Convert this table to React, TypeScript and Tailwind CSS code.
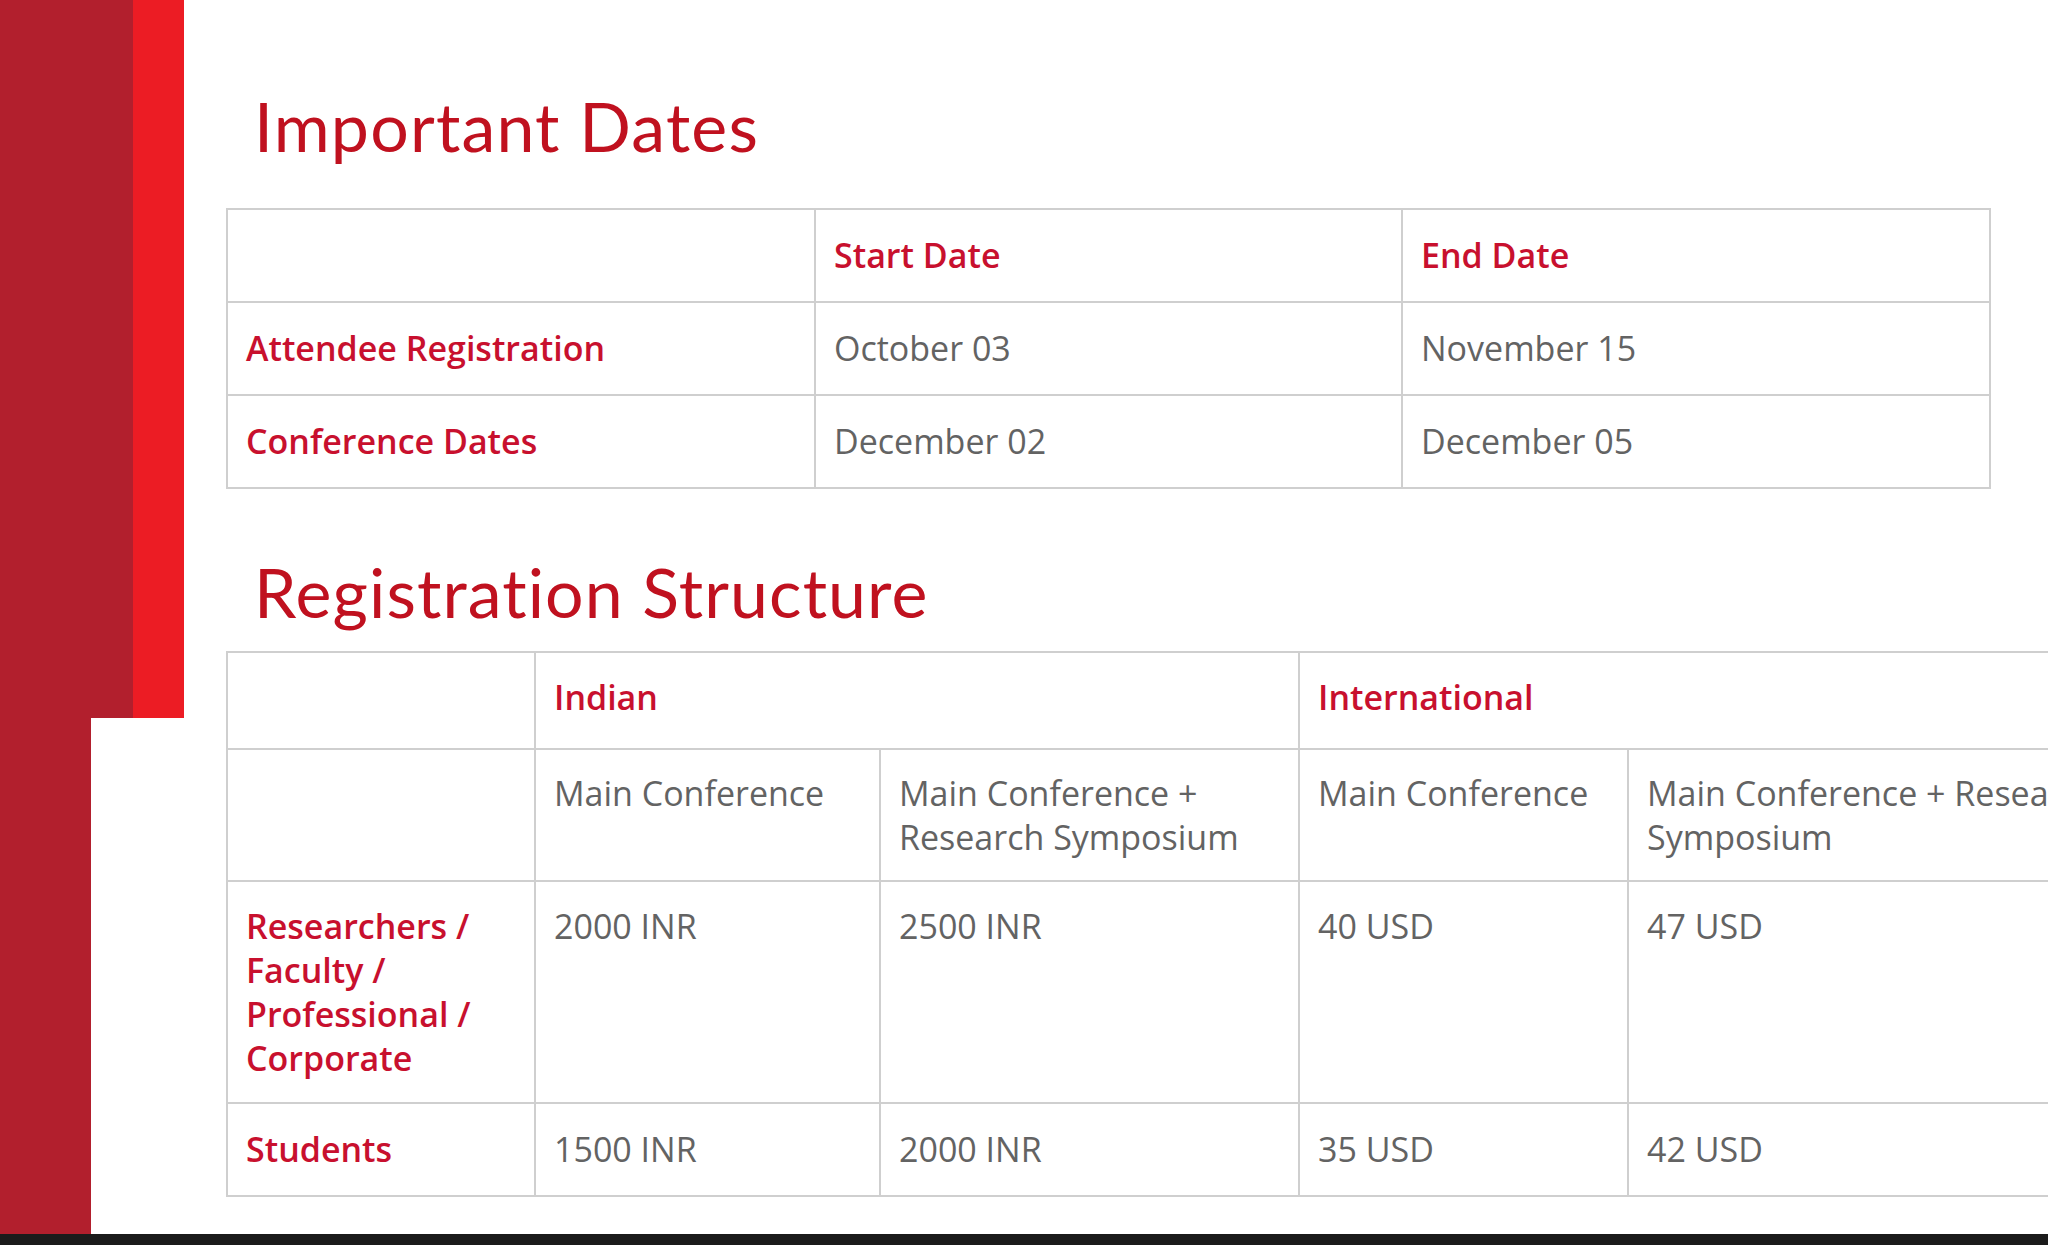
import React from 'react';

const body = { fontFamily: '"Open Sans", "Noto Sans", Arial, sans-serif' };
const head = { fontFamily: 'Lato, "Open Sans", sans-serif' };

const cell = 'border-2 border-[#cfcfcf] px-[18px] py-[22px] align-top text-left';
const cellShort = 'border-2 border-[#cfcfcf] px-[18px] py-[21px] align-top text-left';
const cellTall = 'border-2 border-[#cfcfcf] px-[18px] pt-[23px] pb-[24px] align-top text-left';
const red = 'font-semibold text-[#c8102e]';
const gray = 'font-normal text-[#636363]';

const dates = [
    { name: 'Attendee Registration', start: 'October 03', end: 'November 15' },
    { name: 'Conference Dates', start: 'December 02', end: 'December 05' },
];

const fees = [
    { name: 'Researchers / Faculty / Professional / Corporate', values: ['2000 INR', '2500 INR', '40 USD', '47 USD'] },
    { name: 'Students', values: ['1500 INR', '2000 INR', '35 USD', '42 USD'] },
];

export default function App() {
    return (
        <div className="w-screen h-screen overflow-hidden bg-white flex flex-col" style={body}>
            <div className="flex flex-1 min-h-0">
                {/* red side strip */}
                <div className="w-[184px] shrink-0 flex flex-col">
                    <div className="h-[718px] flex">
                        <div className="w-[133px] bg-[#b21f2d]" />
                        <div className="flex-1 bg-[#ec1c24]" />
                    </div>
                    <div className="flex-1 flex">
                        <div className="w-[91px] bg-[#b21f2d]" />
                    </div>
                </div>

                <div className="flex-1 min-w-0 pl-[42px] pt-[92px]">
                    <h2 className="ml-[28px] text-[68px] leading-[68px] tracking-[1.2px] font-normal text-[#c0111f] mb-[48px]" style={head}>
                        Important Dates
                    </h2>
                    <table className="table-fixed border-collapse w-[1763px] text-[34px] leading-[44px]">
                        <colgroup>
                            <col className="w-[588px]" />
                            <col className="w-[587px]" />
                            <col className="w-[588px]" />
                        </colgroup>
                        <tbody>
                            <tr>
                                <td className={cellTall}>&nbsp;</td>
                                <td className={`${cellTall} ${red}`}>Start Date</td>
                                <td className={`${cellTall} ${red}`}>End Date</td>
                            </tr>
                            {dates.map((d) => (
                                <tr key={d.name}>
                                    <td className={`${cellTall} ${red}`}>{d.name}</td>
                                    <td className={`${cellTall} ${gray}`}>{d.start}</td>
                                    <td className={`${cellTall} ${gray}`}>{d.end}</td>
                                </tr>
                            ))}
                        </tbody>
                    </table>

                    <h2 className="ml-[28px] mt-[69px] text-[68px] leading-[68px] tracking-[1.1px] font-normal text-[#c0111f] mb-[25px]" style={head}>
                        Registration Structure
                    </h2>
                    <table className="table-fixed border-collapse w-[2001px] text-[34px] leading-[44px]">
                        <colgroup>
                            <col className="w-[308px]" />
                            <col className="w-[345px]" />
                            <col className="w-[419px]" />
                            <col className="w-[329px]" />
                            <col className="w-[600px]" />
                        </colgroup>
                        <tbody>
                            <tr>
                                <td className={`${cell} h-[97px]`}>&nbsp;</td>
                                <td colSpan={2} className={`${cell} ${red}`}>Indian</td>
                                <td colSpan={2} className={`${cell} ${red}`}>International</td>
                            </tr>
                            <tr>
                                <td className={cellShort}>&nbsp;</td>
                                <td className={`${cellShort} ${gray}`}>Main Conference</td>
                                <td className={`${cellShort} ${gray}`}>Main Conference + Research Symposium</td>
                                <td className={`${cellShort} ${gray}`}>Main Conference</td>
                                <td className={`${cellShort} ${gray}`}>Main Conference + Research Symposium</td>
                            </tr>
                            {fees.map((f, r) => (
                                <tr key={f.name}>
                                    <td className={`${r === 1 ? cellTall : cell} ${red}`}>{f.name}</td>
                                    {f.values.map((v, i) => (
                                        <td key={i} className={`${r === 1 ? cellTall : cell} ${gray}`}>{v}</td>
                                    ))}
                                </tr>
                            ))}
                        </tbody>
                    </table>
                </div>
            </div>
            <div className="h-[11px] shrink-0 bg-[#1b1b1b]" />
        </div>
    );
}
